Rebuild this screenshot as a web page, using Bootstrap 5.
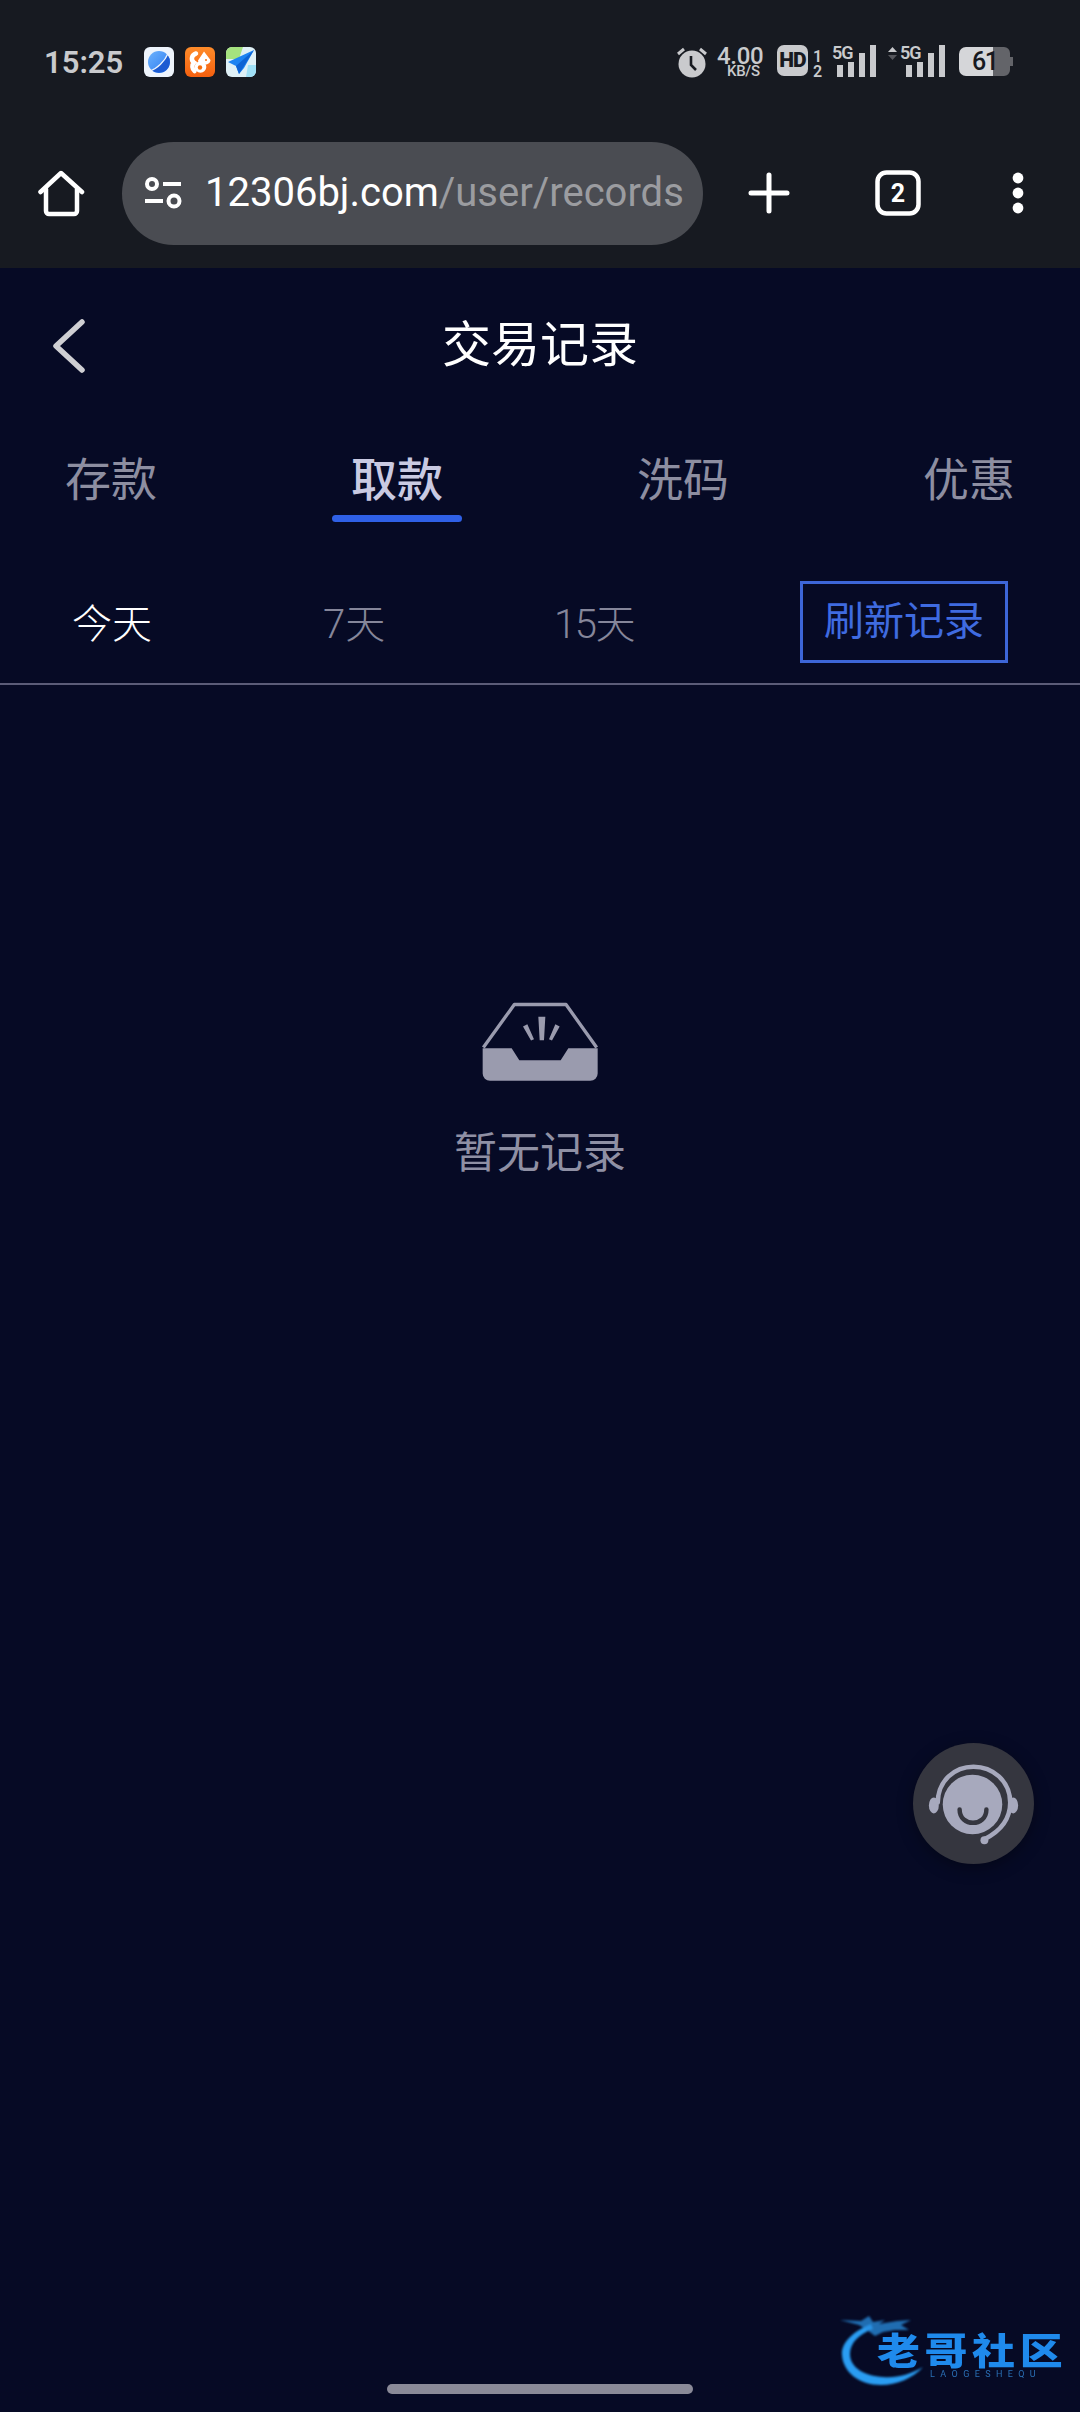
<!DOCTYPE html>
<html lang="zh-CN">
<head>
<meta charset="utf-8">
<title>交易记录</title>
<link href="https://cdn.jsdelivr.net/npm/bootstrap@5.3.0/dist/css/bootstrap.min.css" rel="stylesheet">
<style>
html,body{margin:0;background:#060a25;}
body{font-family:Roboto,"Noto Sans CJK SC",sans-serif;width:1080px;height:2412px;overflow:hidden;position:relative;color:#fff;}
.sys-top{height:268px;background:#171a21;}
.status-row{height:124px;padding:0 0 0 44px;color:#c9cacd;}
.clock{font-size:31px;font-weight:600;line-height:1;width:100px;}
.noti-icons{gap:11px;}
.noti-icons svg{width:30px;height:30px;display:block;}
.sys-icons{position:relative;width:340px;height:36px;margin-left:auto;margin-right:64px;}
.sys-icons>*{position:absolute;}
.speed-a{left:41px;top:1px;font-size:24px;line-height:22px;font-weight:500;letter-spacing:-.3px;}
.speed-b{left:51px;top:20px;font-size:15px;line-height:14px;font-weight:500;letter-spacing:-.3px;}
.sim-n{left:137px;top:5px;font-size:16px;line-height:15px;font-weight:600;}
.net-5g{font-size:18px;line-height:14px;font-weight:600;letter-spacing:-1px;}
.hd-chip{left:101px;top:1px;width:31px;height:31px;background:#c9cacd;border-radius:7px;color:#17191f;font-size:21px;line-height:31px;font-weight:900;text-align:center;letter-spacing:-.8px;}
.batt-num{left:296px;top:3px;font-size:25px;line-height:29px;font-weight:500;color:#17191f;letter-spacing:-1.5px;}
.tool-row{height:144px;padding-bottom:6px;}
.home-cell{width:122px;}
.url-pill{width:581px;height:103px;border-radius:52px;background:#4a4c52;padding:0 14px 0 22px;overflow:hidden;white-space:nowrap;}
.url-text{font-size:40px;line-height:1;margin-left:23px;}
.url-path{color:#9b9ca0;}
.tool-plus{margin-left:45px;}
.tool-tab{margin-left:85px;}
.tool-dots{margin-left:91px;}
.head-row{height:154px;position:relative;}
.back-btn{position:absolute;left:52px;top:51px;}
.page-title{font-size:49px;font-weight:400;line-height:1;margin:0;color:#fff;}
.kind-tabs{padding:0 46px;height:100px;}
.kind-tab{width:130px;text-align:center;color:#8d8ea1;font-size:46px;line-height:56px;position:relative;height:100px;padding:30px 0 0;}
.kind-tab:hover{color:#8d8ea1;}
.kind-tab.active{color:#c9cae2;font-weight:500;}
.kind-tab.active::after{content:"";position:absolute;left:0;right:0;top:93px;height:7px;border-radius:4px;background:#2f60e6;}
.range-row{height:163px;padding:59px 72px 20px;border-bottom:2px solid #5b5c78;}
.range-a{font-size:40px;font-weight:300;line-height:1;color:#85869a;padding-top:5px;}
.range-a.on{color:#fff;}
.range-a.tight{letter-spacing:-1.5px;}
.r0{width:251px;}
.r1{width:231px;}
.r2{width:246px;}
.refresh-btn{width:208px;height:82px;border:3px solid #3d66d8;border-radius:0;color:#3f6be0;background:transparent;font-size:40px;line-height:1;padding:0;display:flex;align-items:center;justify-content:center;white-space:nowrap;}
.refresh-btn:hover{color:#3f6be0;border-color:#3d66d8;background:transparent;}
.empty-box{padding-top:315px;}
.empty-box svg{display:block;width:120px;height:85px;}
.empty-text{margin-top:47px;font-size:43px;line-height:1;color:#8f90a4;}
.help-fab{position:absolute;left:913px;top:1743px;width:121px;height:121px;border-radius:50%;background:#35363f;box-shadow:0 4px 16px rgba(0,0,0,.35);}
.brand-mark{position:absolute;left:835px;top:2310px;width:235px;height:80px;}
.brand-name{position:absolute;left:42px;top:24px;font-size:37px;line-height:1;font-weight:900;letter-spacing:4px;white-space:nowrap;color:#1f8aec;filter:blur(.6px);transform:scaleX(1.16);transform-origin:left center;}
.brand-sub{position:absolute;left:95px;top:60px;font-size:9px;line-height:1;letter-spacing:5.4px;color:#2a6fb5;filter:blur(.4px);white-space:nowrap;}
.brand-mark svg{position:absolute;left:0;top:0;filter:blur(.8px);}
.gesture-bar{position:absolute;left:387px;top:2384px;width:306px;height:10px;border-radius:5px;background:#8a8a98;}
</style>
</head>
<body>
<div class="sys-top">
  <div class="status-row d-flex align-items-center">
    <div class="clock">15:25</div>
    <div class="noti-icons d-flex align-items-center">
      <svg viewBox="0 0 30 30"><defs><linearGradient id="g1" x1="0" y1="0" x2="1" y2="1"><stop offset="0" stop-color="#6db2fc"/><stop offset="1" stop-color="#2a7af2"/></linearGradient></defs><rect width="30" height="30" rx="6" fill="#eef4fc"/><circle cx="15" cy="15" r="11" fill="url(#g1)"/><path d="M7.500 23C14 21 21 14 23.500 8A11 11 0 0 1 7.500 23Z" fill="#1c5bd2"/><path d="M6 24C13 22 21 14 24 6.500" stroke="#eef4fc" stroke-width="1.300" fill="none"/></svg>
      <svg viewBox="0 0 30 30"><defs><linearGradient id="g2" x1="0" y1="0" x2="0" y2="1"><stop offset="0" stop-color="#ff8c2a"/><stop offset="1" stop-color="#f5600f"/></linearGradient></defs><rect width="30" height="30" rx="6" fill="url(#g2)"/><path d="M11 6.500C6.500 8 5.500 13 9 15.500C6.500 18 7 22 9.500 24" fill="none" stroke="#fff" stroke-width="4.500" stroke-linecap="round"/><circle cx="15.500" cy="20" r="5.800" fill="#fff"/><circle cx="15" cy="20.500" r="2.200" fill="#f5700f"/><path d="M13 13.500L19 4.500L25.500 13C25.500 16 22.500 18 19 17.500L14 17Z" fill="#fff"/><circle cx="21" cy="13" r="1" fill="#f5700f"/></svg>
      <svg viewBox="0 0 30 30"><rect width="30" height="30" rx="6" fill="#dff0f6"/><path d="M0 6a6 6 0 0 1 6-6h11L13 12H0Z" fill="#a5e27f"/><path d="M22 18H30V24a6 6 0 0 1-6 6H20Z" fill="#9fe0f6"/><path d="M28 3L2 15L10 19L13 27L18 21Z" fill="#1c83f2"/><path d="M28 3L10 19L13 27Z" fill="#0d63d4"/></svg>
    </div>
    <div class="sys-icons">
      <svg style="left:-1px;top:2px" width="34" height="33" viewBox="0 0 32 33"><circle cx="16" cy="18" r="13.500" fill="#c9cacd"/><path d="M15 10v9l5 5" stroke="#171a21" stroke-width="2.600" fill="none"/><path d="M2 8L8 3M30 8L24 3" stroke="#c9cacd" stroke-width="3"/></svg>
      <span class="speed-a">4.00</span>
      <span class="speed-b">KB/S</span>
      <div class="hd-chip">HD</div>
      <span class="sim-n">1<br>2</span>
      <span class="net-5g" style="left:156px;top:2px">5G</span>
      <svg style="left:161px;top:1px" width="40" height="32" viewBox="0 0 40 32"><path d="M0 20h6v12H0zM11 17h6v15h-6zM22 8h6v24h-6zM33 0h6v32h-6z" fill="#c9cacd"/></svg>
      <svg style="left:212px;top:3px" width="9" height="13" viewBox="0 0 9 13"><path d="M0 5L4.500 0L9 5Z" fill="#c9cacd"/><path d="M0 8L4.500 13L9 8Z" fill="#55565c"/></svg>
      <span class="net-5g" style="left:224px;top:2px">5G</span>
      <svg style="left:230px;top:1px" width="40" height="32" viewBox="0 0 40 32"><path d="M0 20h6v12H0zM11 17h6v15h-6zM22 8h6v24h-6zM33 0h6v32h-6z" fill="#c9cacd"/></svg>
      <svg style="left:283px;top:3px" width="55" height="29" viewBox="0 0 55 29"><path d="M7 0H34V29H7a7 7 0 0 1-7-7V7a7 7 0 0 1 7-7Z" fill="#d5d6d9"/><path d="M34 0H45a6 6 0 0 1 6 6V10h3V19h-3V23a6 6 0 0 1-6 6H34Z" fill="#636469"/></svg>
      <span class="batt-num">61</span>
    </div>
  </div>
  <div class="tool-row d-flex align-items-center">
    <div class="home-cell d-flex justify-content-center">
      <svg width="47" height="47" viewBox="0 0 47 47" fill="none" stroke="#fff" stroke-width="4.500" stroke-linejoin="round" stroke-linecap="round"><path d="M2.500 22L23 3l21 19"/><path d="M8 19v22a3 3 0 0 0 3 3h25a3 3 0 0 0 3-3V19"/></svg>
    </div>
    <div class="url-pill d-flex align-items-center">
      <svg width="38" height="32" viewBox="0 0 38 32" fill="none" stroke="#fff" stroke-width="4" class="flex-shrink-0"><circle cx="8" cy="7" r="5"/><path d="M19 7H37M1 24H19"/><circle cx="30" cy="24" r="5.500"/></svg>
      <div class="url-text">12306bj.com<span class="url-path">/user/records</span></div>
    </div>
    <svg class="tool-plus" width="42" height="42" viewBox="0 0 42 42" stroke="#fff" stroke-width="5" stroke-linecap="round"><path d="M21 3V39M3 21H39"/></svg>
    <svg class="tool-tab" width="46" height="46" viewBox="0 0 46 46"><rect x="2.500" y="2.500" width="41" height="41" rx="9" fill="none" stroke="#fff" stroke-width="4.500"/><text x="23" y="32" text-anchor="middle" font-family="Roboto" font-size="25" font-weight="700" fill="#fff">2</text></svg>
    <svg class="tool-dots" width="12" height="42" viewBox="0 0 12 42" fill="#fff"><circle cx="6" cy="6" r="5.400"/><circle cx="6" cy="21" r="5.400"/><circle cx="6" cy="36" r="5.400"/></svg>
  </div>
</div>
<main>
  <div class="head-row d-flex align-items-center justify-content-center">
    <a class="back-btn" href="#" aria-label="返回"><svg width="34" height="54" viewBox="0 0 34 54" fill="none" stroke="#cfcfd3" stroke-width="5.500" stroke-linecap="round" stroke-linejoin="round"><path d="M30 3L4 27l26 24"/></svg></a>
    <h1 class="page-title">交易记录</h1>
  </div>
  <nav class="nav kind-tabs justify-content-between">
    <a class="nav-link kind-tab" href="#">存款</a>
    <a class="nav-link kind-tab active" href="#">取款</a>
    <a class="nav-link kind-tab" href="#">洗码</a>
    <a class="nav-link kind-tab" href="#">优惠</a>
  </nav>
  <div class="range-row d-flex align-items-center">
    <div class="range-a on r0">今天</div>
    <div class="range-a r1">7天</div>
    <div class="range-a r2 tight">15天</div>
    <button type="button" class="btn refresh-btn">刷新记录</button>
  </div>
  <div class="empty-box d-flex flex-column align-items-center">
    <svg viewBox="180 90 360 250"><path d="M190 230L283 101H438L530 230" fill="none" stroke="#9a9bae" stroke-width="10" stroke-linejoin="round"/><path d="M188 232H275L298 268H422L445 232H533V308a22 22 0 0 1-22 22H210a22 22 0 0 1-22-22Z" fill="#9a9bae"/><path d="M355 138H376L372 208H359ZM309 167L322 160L342 205L333 209ZM419 167L406 160L387 205L396 209Z" fill="#9a9bae"/></svg>
    <div class="empty-text">暂无记录</div>
  </div>
</main>
<a class="help-fab d-flex" href="#" aria-label="客服">
  <svg width="121" height="121" viewBox="0 0 122 122"><circle cx="60" cy="62" r="30" fill="#a7a9bd"/><path d="M25 60C25 38 42 24 61 24C80 24 98 38 98 60C98 76 90 88 72 97" fill="none" stroke="#a7a9bd" stroke-width="4.500" stroke-linecap="round"/><ellipse cx="21" cy="63" rx="5" ry="8" fill="#a7a9bd"/><ellipse cx="101" cy="63" rx="5" ry="8" fill="#a7a9bd"/><circle cx="72" cy="98" r="4" fill="#a7a9bd"/><path d="M47 67C47 85 74 85 74 67" fill="none" stroke="#35363f" stroke-width="4.500" stroke-linecap="round"/></svg>
</a>
<div class="brand-mark">
  <svg width="235" height="80" viewBox="0 0 235 80"><path d="M36 14C16 22 6 34 7 45C8 62 24 75 46 75C62 75 78 68 88 57C74 65 62 68 48 67C30 66 15 58 15 44C15 33 24 24 38 19Z" fill="#2a9df2"/><path d="M5 10L26 11L34 6L38 12L50 10L44 14L62 11L76 10L66 15L74 20L60 20L48 22L40 26L32 20L24 15Z" fill="#2a8fe0" opacity=".75"/></svg>
  <div class="brand-name">老哥社区</div>
  <div class="brand-sub">LAOGESHEQU</div>
</div>
<div class="gesture-bar"></div>
<script src="https://cdn.jsdelivr.net/npm/bootstrap@5.3.0/dist/js/bootstrap.bundle.min.js"></script>
</body>
</html>
